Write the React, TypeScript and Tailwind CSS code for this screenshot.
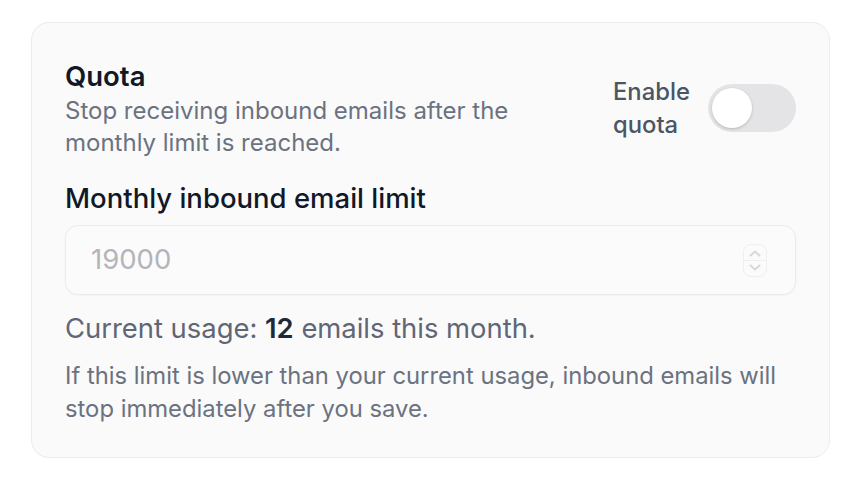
import { useState } from 'react';

export default function App() {
  const [enabled, setEnabled] = useState(false);

  return (
    <div className="min-h-screen bg-white pt-[22px] pl-[31px] font-['Inter',sans-serif]">
      <div className="w-[799px] h-[436px] rounded-[18px] border border-[#ececee] bg-[#fafafa] px-[33px] pt-[36px]">
        {/* header */}
        <div className="flex items-start justify-between">
          <div>
            <h2 className="text-[27.5px] leading-[34px] font-semibold text-[#111827]">Quota</h2>
            <p className="mt-[2px] text-[24px] leading-[32px] text-[#6b7280] w-[470px]">
              Stop receiving inbound emails after the monthly limit is reached.
            </p>
          </div>
          <div className="flex items-center gap-[15px] pt-[16px]">
            <span className="w-[80px] text-[23.8px] leading-[33px] font-medium text-[#4b5563]">Enable quota</span>
            <button
              onClick={() => setEnabled(!enabled)}
              className={`w-[88px] h-[48px] rounded-full p-[4px] flex ${enabled ? 'bg-[#111827] justify-end' : 'bg-[#e4e4e7] justify-start'}`}
            >
              <span className="block w-[40px] h-[40px] rounded-full bg-white shadow-[0_1px_3px_rgba(0,0,0,0.2)]" />
            </button>
          </div>
        </div>

        {/* limit */}
        <div className="mt-[22px] text-[27.5px] leading-[34px] font-medium text-[#111827]">Monthly inbound email limit</div>
        <div className="mt-[10px] h-[70px] rounded-[13px] border border-[#ebebed] bg-[#fbfbfb] flex items-center justify-between pl-[25px] pr-[28px] shadow-[0_1px_2px_rgba(0,0,0,0.03)]">
          <span className="text-[27.5px] text-[#b4b4ba]">19000</span>
          <div className="w-[24px] h-[33px] rounded-[8px] border border-[#efeff1] flex flex-col items-center justify-center">
            <svg width="12" height="7" viewBox="0 0 12 7" fill="none" stroke="#d8d8dc" strokeWidth="2" strokeLinecap="round" strokeLinejoin="round">
              <path d="M1.5 5.5 6 1.5l4.5 4" />
            </svg>
            <div className="w-full h-px bg-[#efeff1] my-[3px]" />
            <svg width="12" height="7" viewBox="0 0 12 7" fill="none" stroke="#d8d8dc" strokeWidth="2" strokeLinecap="round" strokeLinejoin="round">
              <path d="M1.5 1.5 6 5.5l4.5-4" />
            </svg>
          </div>
        </div>

        <p className="mt-[16px] text-[27.4px] leading-[34px] text-[#5f6675]">
          Current usage: <span className="font-semibold text-[#1f2937]">12</span> emails this month.
        </p>
        <p className="mt-[14px] text-[23.8px] leading-[33px] text-[#6b7280] w-[740px]">
          If this limit is lower than your current usage, inbound emails will stop immediately after you save.
        </p>
      </div>
    </div>
  );
}
